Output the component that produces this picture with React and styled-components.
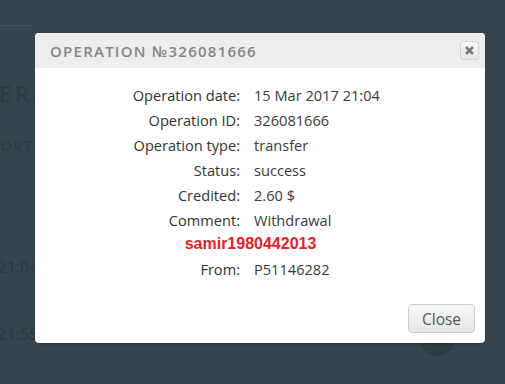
import React from 'react';
import styled, { createGlobalStyle } from 'styled-components';

const COLORS = {
  backdrop: '#37454d',
  ghost: '#2e3b42',
  headerBg: '#eeeeee',
  title: '#858585',
  label: '#333333',
  value: '#3a3a3a',
  red: '#ee1c24',
};

const GlobalStyle = createGlobalStyle`
  html, body {
    margin: 0;
    padding: 0;
    background: ${COLORS.backdrop};
  }
  body {
    font-family: "Open Sans", "Liberation Sans", sans-serif;
  }
`;

const ROWS = [
  ['Operation date:', '15 Mar 2017 21:04'],
  ['Operation ID:', '326081666'],
  ['Operation type:', 'transfer'],
  ['Status:', 'success'],
  ['Credited:', '2.60 $'],
  ['Comment:', 'Withdrawal'],
];

const CrossIcon = () => (
  <svg width="11" height="11" viewBox="0 0 11 11" aria-hidden="true">
    <path d="M2 2 L9 9 M9 2 L2 9" stroke="#7b7b7b" strokeWidth="2.6" strokeLinecap="butt" />
  </svg>
);

const App = () => {
  return (
    <>
      <GlobalStyle />
      <Screen>
        <Page>
          <TopRule />
          <PageTitle>Operations</PageTitle>
          <ReportLink>Report</ReportLink>
          <GhostRow>7 21:04</GhostRow>
          <GhostRow>7 21:55</GhostRow>
        </Page>
        <GhostBadge />

        <Modal role="dialog">
          <Header>
            <Title>Operation №326081666</Title>
            <XButton aria-label="Close">
              <CrossIcon />
            </XButton>
          </Header>
          <Body>
            <Grid>
              {ROWS.map(([label, value]) => (
                <React.Fragment key={label}>
                  <Label>{label}</Label>
                  <Value>{value}</Value>
                </React.Fragment>
              ))}
            </Grid>
            <Highlight>samir1980442013</Highlight>
            <Grid>
              <Label>From:</Label>
              <Value>P51146282</Value>
            </Grid>
          </Body>
          <Footer>
            <CloseButton>Close</CloseButton>
          </Footer>
        </Modal>
      </Screen>
    </>
  );
};

const Screen = styled.div`
  position: relative;
  width: 505px;
  height: 384px;
  overflow: hidden;
  background: ${COLORS.backdrop};
`;

const Page = styled.div`
  display: flex;
  flex-direction: column;
  align-items: flex-start;
  margin-left: -40px;
  color: ${COLORS.ghost};
`;

const TopRule = styled.div`
  width: 70px;
  height: 1px;
  margin-top: 25px;
  background: #46535a;
`;

const PageTitle = styled.h1`
  margin: 55px 0 0;
  font-size: 22px;
  font-weight: 600;
  letter-spacing: 4px;
  text-transform: uppercase;
  line-height: 24px;
`;

const ReportLink = styled.span`
  margin-top: 30px;
  font-size: 15px;
  font-weight: 600;
  letter-spacing: 1px;
  text-transform: uppercase;
  border-bottom: 1px dotted ${COLORS.ghost};
  padding-left: 10px;
  line-height: 20px;
`;

const GhostRow = styled.div`
  margin-top: 100px;
  padding-left: 24px;
  font-size: 16px;
  font-weight: 600;
  &:last-child {
    margin-top: 45px;
  }
`;

const GhostBadge = styled.div`
  position: absolute;
  left: 420px;
  top: 322px;
  width: 34px;
  height: 34px;
  border-radius: 50%;
  background: #2e3b42;
`;

const Modal = styled.div`
  position: absolute;
  left: 35px;
  top: 33px;
  width: 450px;
  height: 310px;
  display: flex;
  flex-direction: column;
  background: #ffffff;
  border-radius: 4px;
  overflow: hidden;
  box-shadow: 0 1px 2px rgba(0, 0, 0, 0.35);
`;

const Header = styled.div`
  display: flex;
  align-items: center;
  justify-content: space-between;
  height: 35px;
  padding: 0 6px 0 15px;
  background: ${COLORS.headerBg};
`;

const Title = styled.h2`
  margin: 0;
  font-size: 15px;
  font-weight: 600;
  letter-spacing: 1.25px;
  text-transform: uppercase;
  color: ${COLORS.title};
`;

const XButton = styled.button`
  display: flex;
  align-items: center;
  justify-content: center;
  width: 19px;
  height: 19px;
  padding: 0;
  border: 1px solid #d2d2d2;
  border-radius: 3px;
  background: linear-gradient(#f6f6f6, #e8e8e8);
`;

const Body = styled.div`
  flex: 1;
  display: flex;
  flex-direction: column;
  padding-top: 17px;
`;

const Grid = styled.div`
  display: grid;
  grid-template-columns: 205px 1fr;
  column-gap: 14px;
  row-gap: 5px;
`;

const Label = styled.div`
  text-align: right;
  font-size: 14.6px;
  line-height: 20px;
  color: ${COLORS.label};
`;

const Value = styled.div`
  font-size: 14.6px;
  line-height: 20px;
  color: ${COLORS.value};
`;

const Highlight = styled.div`
  margin: 4px 0 5px;
  padding-right: 19px;
  text-align: center;
  font-family: "Liberation Sans", Arial, sans-serif;
  font-size: 16px;
  font-weight: 700;
  line-height: 20px;
  color: ${COLORS.red};
`;

const Footer = styled.div`
  display: flex;
  justify-content: flex-end;
  padding: 0 10px 10px;
`;

const CloseButton = styled.button`
  width: 67px;
  height: 29px;
  padding: 0;
  border: 1px solid #cccccc;
  border-radius: 4px;
  background: linear-gradient(#f7f7f7, #e6e6e6);
  font-family: "Open Sans", "Liberation Sans", sans-serif;
  font-size: 15.5px;
  color: #555555;
`;

export default App;
